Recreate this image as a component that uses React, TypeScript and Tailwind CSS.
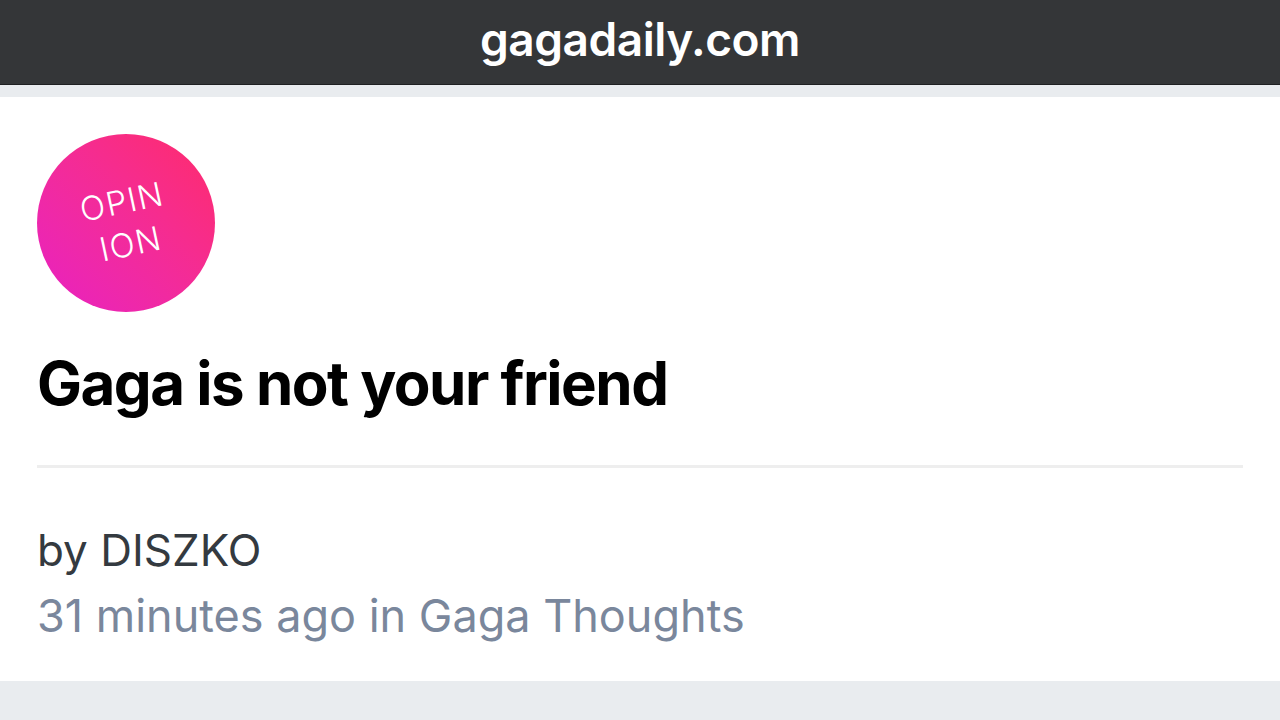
export default function App() {
  return (
    <div className="flex h-[720px] w-[1280px] flex-col bg-white font-['Inter',sans-serif]">
      <header className="flex h-[85px] items-center justify-center border-b border-[#1f2022] bg-[#343638]">
        <span className="pb-[6px] text-[46px] font-semibold tracking-[-0.01em] text-white">
          gagadaily.com
        </span>
      </header>
      <div className="h-[12px] bg-[#e9ecef]" />

      <main className="flex-1 px-[37px] pt-[37px]">
        <div className="flex h-[178px] w-[178px] items-center justify-center rounded-full bg-gradient-to-bl from-[#ff2a6a] to-[#e81ec2]">
          <span className="-rotate-[12deg] text-center text-[33px] font-light leading-[43px] tracking-[0.04em] text-white">
            OPIN
            <br />
            ION
          </span>
        </div>

        <h1 className="mt-[41px] text-[60px] font-bold leading-none tracking-[-0.025em] text-black">
          Gaga is not your friend
        </h1>

        <hr className="mt-[52px] w-[1206px] border-t-[3px] border-[#eeeeee]" />

        <p className="mt-[60px] text-[44px] leading-none text-[#343a40]">
          by DISZKO
        </p>
        <p className="mt-[21px] text-[45px] leading-none text-[#7a879c]">
          31 minutes ago in Gaga Thoughts
        </p>
      </main>

      <div className="h-[39px] bg-[#e9ecef]" />
    </div>
  );
}
